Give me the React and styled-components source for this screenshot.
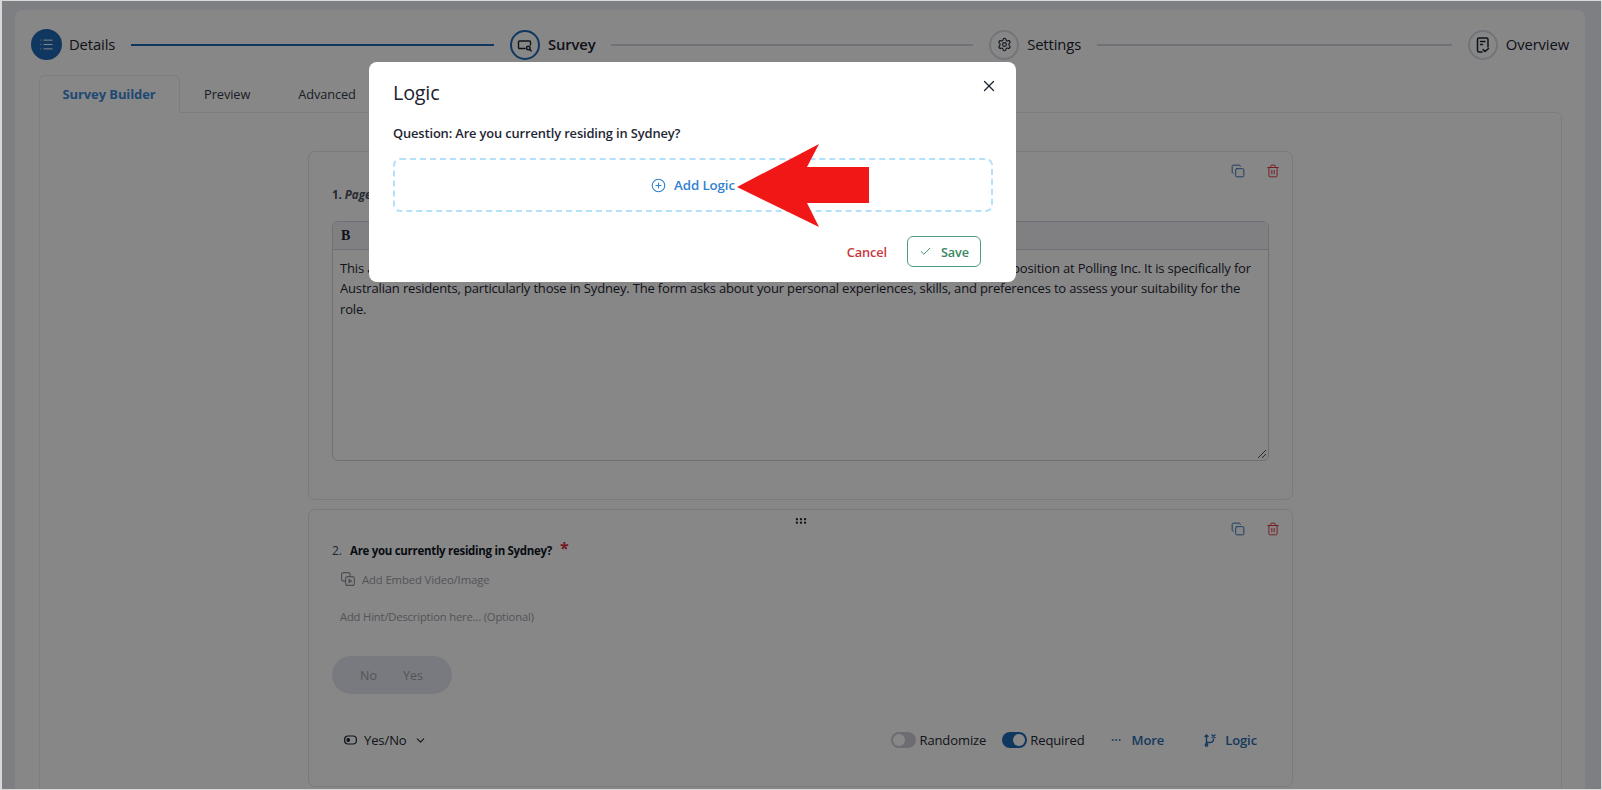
import React from 'react';
import styled, { createGlobalStyle } from 'styled-components';
import { List, Settings, Copy, Trash2, X, Check, CirclePlus, Ellipsis, GripHorizontal, ChevronDown } from 'lucide-react';

const Global = createGlobalStyle`
  html, body { margin: 0; padding: 0; height: 790px; overflow: hidden; background: #eceef5; }
  body { font-family: "Open Sans", "Noto Sans", sans-serif; color: #1b2230; }
  * { box-sizing: border-box; }
`;

const Page = styled.div`
  position: relative;
  width: 1602px;
  height: 790px;
  overflow: hidden;
  padding: 10px 17px 0 15px;
  background: #eceef5;
`;
const FrameEdge = styled.div`
  position: absolute;
  inset: 0;
  border: 1px solid #d8d8d8;
  border-width: 1px 1px 1px 2px;
  z-index: 30;
  pointer-events: none;
`;
const Shell = styled.div`
  height: 830px;
  background: #fdfdfd;
  border-radius: 8px;
  padding: 19px 16px 0;
`;
const Stepper = styled.div`
  display: flex;
  align-items: center;
  gap: 16px;
  height: 31px;
  margin-bottom: 15px;
`;
const Step = styled.div`
  display: flex;
  align-items: center;
  gap: ${p => (p.$tight ? 7 : 8)}px;
  font-size: 14.8px;
  letter-spacing: -0.12px;
  line-height: 18px;
  font-weight: ${p => (p.$current ? 600 : 400)};
  white-space: nowrap;
`;
const StepLabel = styled.span`
  margin-top: -1px;
`;
const StepCircle = styled.span`
  width: ${p => (p.$filled ? 31 : 30)}px;
  height: ${p => (p.$filled ? 31 : 30)}px;
  border-radius: 50%;
  display: flex;
  align-items: center;
  justify-content: center;
  color: ${p => (p.$filled ? '#fff' : '#1b2230')};
  background: ${p => (p.$filled ? '#1f67b3' : 'transparent')};
  border: 2px solid ${p => (p.$filled || p.$current ? '#1f67b3' : '#d5d9e3')};
`;
const Connector = styled.span`
  height: 2px;
  width: ${p => p.$w}px;
  background: ${p => (p.$done ? '#1f67b3' : '#d2d6e0')};
`;
const Tabs = styled.div`
  display: flex;
  margin-left: 8px;
  height: 37px;
  position: relative;
  z-index: 1;
`;
const Tab = styled.div`
  display: flex;
  align-items: center;
  font-size: ${p => (p.$active ? 13 : 12.8)}px;
  letter-spacing: -0.1px;
  padding: ${p => (p.$active ? '0 23.5px 2px 22.5px' : '0 23px 2px')};
  font-weight: ${p => (p.$active ? 700 : 400)};
  color: ${p => (p.$active ? '#3a8ad8' : '#333b49')};
  background: ${p => (p.$active ? '#fdfdfd' : 'transparent')};
  border: ${p => (p.$active ? '1px solid #e8eaf0' : '1px solid transparent')};
  border-bottom: 0;
  border-radius: 6px 6px 0 0;
  margin-bottom: -1px;
`;
const Panel = styled.div`
  margin-left: 8px;
  width: 1523px;
  height: 720px;
  border: 1px solid #e8eaf0;
  border-radius: 0 6px 6px 6px;
  padding: 38px 268px 0 268px;
  display: flex;
  flex-direction: column;
  gap: 9px;
`;
const Card = styled.section`
  position: relative;
  height: ${p => p.$h}px;
  flex: none;
  border: 1px solid #e1e4ec;
  border-radius: 7px;
  padding: 0 23px;
`;
const CardTools = styled.div`
  position: absolute;
  top: 12px;
  right: 12px;
  display: flex;
  gap: 21px;
`;
const Tool = styled.span`
  display: flex;
  color: ${p => (p.$danger ? '#d92d3a' : '#2a6cb0')};
`;
const DragHandle = styled.span`
  position: absolute;
  top: 4px;
  left: 485px;
  display: flex;
  color: #20283a;
`;
const PageTitle = styled.div`
  font-size: 11.5px;
  font-weight: 700;
  color: #4c5260;
  padding-top: 35px;
  height: 69px;
`;
const PageName = styled.em`
  font-style: italic;
`;
const Editor = styled.div`
  width: 937px;
  height: 240px;
  border: 1px solid #cfd3dc;
  border-radius: 6px;
  position: relative;
  overflow: hidden;
`;
const EditorBar = styled.div`
  height: 28px;
  background: #f0f1f4;
  border-bottom: 1px solid #cfd3dc;
  padding: 0 8px;
  display: flex;
  align-items: center;
  font-family: "Liberation Serif", serif;
  font-weight: 700;
  font-size: 14px;
`;
const EditorBody = styled.div`
  padding: 8px 7px;
  font-size: 13px;
  line-height: 20.4px;
  letter-spacing: -0.165px;
  color: #1f2633;
  white-space: nowrap;
`;
const Grip = styled.svg`
  position: absolute;
  right: 1px;
  bottom: 1px;
`;
const QuestionRow = styled.div`
  display: flex;
  align-items: center;
  padding-top: 30px;
  height: 50px;
  font-size: 11.5px;
`;
const QuestionNumber = styled.span`
  width: 18px;
  font-size: 12px;
  color: #414856;
`;
const QuestionText = styled.strong`
  font-weight: 700;
  letter-spacing: -0.3px;
  color: #111827;
`;
const Star = styled.span`
  color: #d92d3a;
  font-size: 16px;
  font-weight: 700;
  line-height: 1;
  margin: -4px 0 0 8px;
`;
const EmbedRow = styled.div`
  display: flex;
  align-items: center;
  gap: 7px;
  margin: 9px 0 0 9px;
  height: 20px;
  font-size: 11.3px;
  letter-spacing: -0.12px;
  color: #9a9ea8;
`;
const Hint = styled.div`
  margin: 18px 0 0 8px;
  height: 20px;
  line-height: 20px;
  font-size: 11.2px;
  letter-spacing: -0.15px;
  color: #9a9ea8;
`;
const Pill = styled.div`
  display: flex;
  align-items: center;
  gap: 26px;
  margin-top: 29px;
  width: 120px;
  height: 38px;
  border-radius: 19px;
  background: #e2e5ee;
  padding-left: 28px;
  font-size: 12.5px;
  color: #9a9ea8;
`;
const Footer = styled.div`
  display: flex;
  align-items: center;
  margin-top: 36px;
  height: 20px;
  padding-left: 12px;
  font-size: 13px;
  letter-spacing: -0.1px;
`;
const TypeSelect = styled.div`
  display: flex;
  align-items: center;
  gap: 7px;
  color: #1f2633;
`;
const Controls = styled.div`
  display: flex;
  align-items: center;
  margin-left: auto;
  margin-right: 12px;
`;
const ToggleItem = styled.label`
  display: flex;
  align-items: center;
  gap: 3px;
  margin-right: ${p => p.$mr}px;
  color: #1f2633;
`;
const Toggle = styled.span`
  width: 25px;
  height: 16px;
  border-radius: 8px;
  background: ${p => (p.$on ? '#1f67b3' : '#c9cdd6')};
  position: relative;
  &::after {
    content: '';
    position: absolute;
    top: 2px;
    ${p => (p.$on ? 'right: 2px;' : 'left: 2px;')}
    width: 12px;
    height: 12px;
    border-radius: 50%;
    background: #fff;
  }
`;
const ActionLink = styled.div`
  display: flex;
  align-items: center;
  gap: ${p => p.$gap}px;
  margin-left: ${p => p.$ml || 0}px;
  font-weight: 600;
  color: #2a6cb0;
`;

const Overlay = styled.div`
  position: absolute;
  inset: 0;
  background: rgba(0, 0, 0, 0.467);
  z-index: 10;
`;
const Modal = styled.div`
  position: absolute;
  left: 369px;
  top: 62px;
  width: 647px;
  height: 220px;
  background: #fff;
  border-radius: 8px;
  padding: 18px 24px 0;
  z-index: 20;
`;
const ModalTitle = styled.h2`
  margin: 0;
  font-size: 19.8px;
  line-height: 26px;
  font-weight: 500;
  letter-spacing: -0.2px;
  color: #1b2230;
`;
const CloseButton = styled.span`
  position: absolute;
  top: 15px;
  right: 18px;
  display: flex;
  color: #1b2230;
`;
const ModalQuestion = styled.div`
  margin-top: 18px;
  font-size: 12.9px;
  line-height: 18px;
  font-weight: 600;
  letter-spacing: -0.14px;
  color: #1f2633;
`;
const AddLogicBox = styled.div`
  margin-top: 16px;
  width: 600px;
  height: 54px;
  border: 2px dashed #b5e0fa;
  border-radius: 7px;
  display: flex;
  align-items: center;
  justify-content: center;
  gap: 8px;
  font-size: 13.3px;
  font-weight: 600;
  letter-spacing: -0.1px;
  color: #3182ce;
`;
const ModalActions = styled.div`
  display: flex;
  justify-content: flex-end;
  align-items: center;
  gap: 20px;
  margin: 24px 11px 0 0;
`;
const CancelButton = styled.span`
  font-size: 12.8px;
  font-weight: 600;
  letter-spacing: -0.1px;
  color: #c9363d;
`;
const SaveButton = styled.span`
  width: 74px;
  height: 31px;
  display: flex;
  align-items: center;
  justify-content: center;
  gap: 9px;
  border: 1.5px solid #4f9e7b;
  border-radius: 6px;
  font-size: 12.7px;
  font-weight: 600;
  letter-spacing: -0.1px;
  color: #38875f;
`;
const Arrow = styled.svg`
  position: absolute;
  left: 737px;
  top: 144px;
  z-index: 25;
`;

const SurveyIcon = () => (
  <svg width="16" height="16" viewBox="0 0 16 16" fill="none" stroke="#1b2230" strokeWidth="1.4">
    <path d="M8 11.5H2.5a1 1 0 0 1-1-1V5a1 1 0 0 1 1-1h10a1 1 0 0 1 1 1v3" strokeLinecap="round" />
    <circle cx="11.3" cy="11" r="1.8" />
    <path d="M12.8 12.6l1.4 1.4" strokeLinecap="round" />
  </svg>
);
const OverviewIcon = () => (
  <svg width="16" height="18" viewBox="0 0 16 18" fill="none" stroke="#1b2230" strokeWidth="1.5" strokeLinecap="round" strokeLinejoin="round">
    <path d="M7 16H4a1.5 1.5 0 0 1-1.500-1.500v-11A1.500 1.500 0 0 1 4 2h7.500A1.500 1.500 0 0 1 13 3.500V11" />
    <path d="M5.500 5.500h4.500M5.500 8.500h2M8 13.500l2 2 3.500-3" />
  </svg>
);
const EmbedIcon = () => (
  <svg width="14" height="14" viewBox="0 0 14 14" fill="none" stroke="#8f939d" strokeWidth="1.100">
    <rect x="0.600" y="0.600" width="8.500" height="8.500" rx="2" />
    <rect x="4.600" y="4.600" width="8.800" height="8.800" rx="2" fill="#fdfdfd" />
    <path d="M8 7.500v3l2.500-1.500z" fill="#8f939d" />
  </svg>
);
const ToggleGlyph = () => (
  <svg width="13" height="10" viewBox="0 0 13 10" fill="none" stroke="#1f2633" strokeWidth="1.200">
    <rect x="0.600" y="1" width="11.800" height="8" rx="3.500" />
    <circle cx="4.200" cy="5" r="1.300" fill="#1f2633" />
  </svg>
);
const LogicGlyph = () => (
  <svg width="12" height="13" viewBox="0 0 12 13" fill="none" stroke="#2a6cb0" strokeWidth="1.400" strokeLinecap="round" strokeLinejoin="round">
    <path d="M2.500 1v9M1 2.500L2.500 1 4 2.500" />
    <circle cx="2.500" cy="11" r="1.200" />
    <path d="M2.500 8.500h3c3 0 4-1 4-3V5M8 1l3 2.500M11 1L8 3.500" />
  </svg>
);

export default function App() {
  return (
    <Page>
      <Global />
      <Shell>
        <Stepper>
          <Step $tight>
            <StepCircle $filled><List size={15} strokeWidth={1.6} /></StepCircle>
            <StepLabel>Details</StepLabel>
          </Step>
          <Connector $w={363} $done />
          <Step $current>
            <StepCircle $current><SurveyIcon /></StepCircle>
            <StepLabel>Survey</StepLabel>
          </Step>
          <Connector $w={362} />
          <Step>
            <StepCircle><Settings size={15} strokeWidth={1.7} /></StepCircle>
            <StepLabel>Settings</StepLabel>
          </Step>
          <Connector $w={355} />
          <Step>
            <StepCircle><OverviewIcon /></StepCircle>
            <StepLabel>Overview</StepLabel>
          </Step>
        </Stepper>
        <Tabs>
          <Tab $active>Survey Builder</Tab>
          <Tab>Preview</Tab>
          <Tab>Advanced</Tab>
        </Tabs>
        <Panel>
          <Card $h={349}>
            <CardTools>
              <Tool><Copy size={14} strokeWidth={1.6} /></Tool>
              <Tool $danger><Trash2 size={14} strokeWidth={1.6} /></Tool>
            </CardTools>
            <PageTitle>1. <PageName>Page Title</PageName></PageTitle>
            <Editor>
              <EditorBar>B</EditorBar>
              <EditorBody>
                This application form is designed to gather information from candidates applying for the Customer Service Officer position at Polling Inc. It is specifically for
                <br />
                Australian residents, particularly those in Sydney. The form asks about your personal experiences, skills, and preferences to assess your suitability for the
                <br />
                role.
              </EditorBody>
              <Grip width="10" height="10" viewBox="0 0 10 10" stroke="#555" strokeWidth="1">
                <path d="M9 1L1 9M9 5L5 9" />
              </Grip>
            </Editor>
          </Card>
          <Card $h={278}>
            <DragHandle><GripHorizontal size={14} strokeWidth={2} /></DragHandle>
            <CardTools>
              <Tool><Copy size={14} strokeWidth={1.6} /></Tool>
              <Tool $danger><Trash2 size={14} strokeWidth={1.6} /></Tool>
            </CardTools>
            <QuestionRow>
              <QuestionNumber>2.</QuestionNumber>
              <QuestionText>Are you currently residing in Sydney?</QuestionText>
              <Star>*</Star>
            </QuestionRow>
            <EmbedRow><EmbedIcon />Add Embed Video/Image</EmbedRow>
            <Hint>Add Hint/Description here... (Optional)</Hint>
            <Pill><span>No</span><span>Yes</span></Pill>
            <Footer>
              <TypeSelect>
                <ToggleGlyph />
                <span>Yes/No</span>
                <ChevronDown size={13} strokeWidth={2} />
              </TypeSelect>
              <Controls>
                <ToggleItem $mr={16}><Toggle />Randomize</ToggleItem>
                <ToggleItem $mr={0}><Toggle $on />Required</ToggleItem>
                <ActionLink $gap={10} $ml={25}><Ellipsis size={12} strokeWidth={2} />More</ActionLink>
                <ActionLink $gap={9} $ml={40}><LogicGlyph />Logic</ActionLink>
              </Controls>
            </Footer>
          </Card>
        </Panel>
      </Shell>
      <Overlay />
      <Modal>
        <ModalTitle>Logic</ModalTitle>
        <CloseButton><X size={18} strokeWidth={1.7} /></CloseButton>
        <ModalQuestion>Question: Are you currently residing in Sydney?</ModalQuestion>
        <AddLogicBox>
          <CirclePlus size={15} strokeWidth={1.8} />
          Add Logic
        </AddLogicBox>
        <ModalActions>
          <CancelButton>Cancel</CancelButton>
          <SaveButton><Check size={13} strokeWidth={1.7} />Save</SaveButton>
        </ModalActions>
      </Modal>
      <Arrow width="132" height="83" viewBox="0 0 132 83">
        <path d="M0 43L82 0L70 23H132V59H70L82 83Z" fill="#f21717" />
      </Arrow>
      <FrameEdge />
    </Page>
  );
}
